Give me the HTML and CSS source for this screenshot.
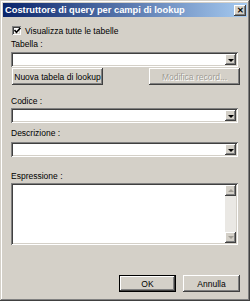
FILE: index.html
```html
<!DOCTYPE html>
<html lang="it">
<head>
    <meta charset="UTF-8">
    <title>Costruttore di query per campi di lookup</title>
    <link rel="stylesheet" href="styles.css">
</head>
<body>
    <div class="window">
        <!-- Barra del titolo -->
        <div class="titlebar">
            <span class="title">Costruttore di query per campi di lookup</span>
            <span class="close">&#x2715;</span>
        </div>

        <div class="content">
            <div class="check-row">
                <span class="checkbox">
                    <svg width="7" height="7" viewBox="0 0 7 7"><path d="M0.5 3 L2.5 5.2 L6.5 0.8" fill="none" stroke="#000" stroke-width="1.6"/></svg>
                </span>
                <span>Visualizza tutte le tabelle</span>
            </div>

            <div class="label lbl-tabella">Tabella :</div>
            <div class="combo c-tabella">
                <div class="combo-field"></div>
                <div class="combo-btn"><span class="arrow"></span></div>
            </div>

            <div class="btn-row">
                <button class="btn btn-nuova">Nuova tabela di lookup</button>
                <button class="btn btn-modifica" disabled>Modifica record...</button>
            </div>

            <div class="label lbl-codice">Codice :</div>
            <div class="combo c-codice">
                <div class="combo-field"></div>
                <div class="combo-btn"><span class="arrow"></span></div>
            </div>

            <div class="label lbl-descr">Descrizione :</div>
            <div class="combo c-descr">
                <div class="combo-field"></div>
                <div class="combo-btn"><span class="arrow"></span></div>
            </div>

            <div class="label lbl-espr">Espressione :</div>
            <div class="memo">
                <div class="memo-text"></div>
                <div class="scrollbar">
                    <div class="sb-btn"><span class="sb-arrow up"></span></div>
                    <div class="sb-track"></div>
                    <div class="sb-btn"><span class="sb-arrow down"></span></div>
                </div>
            </div>

            <div class="footer">
                <button class="btn btn-ok">OK</button>
                <button class="btn btn-annulla">Annulla</button>
            </div>
        </div>
    </div>
</body>
</html>
```

FILE: styles.css
```css
/* Finestra stile Windows classico */
body {
    margin: 0;
    padding: 0;
    background: #d4d0c8;
    font-family: 'Liberation Sans', Arial, sans-serif;
    font-size: 8.5px;
    color: #000;
}

.window {
    width: 250px;
    height: 301px;
    box-sizing: border-box;
    padding: 3px;
    background: #d4d0c8;
    box-shadow: inset -1px -1px #404040, inset 1px 1px #d4d0c8,
                inset -2px -2px #808080, inset 2px 2px #fff;
    display: flex;
    flex-direction: column;
}

/* Barra del titolo */
.titlebar {
    height: 14px;
    background: linear-gradient(90deg, #0a246a, #a6caf0);
    display: flex;
    align-items: center;
    justify-content: space-between;
    padding: 0 1px 0 2px;
}

.title {
    color: #fff;
    font-weight: bold;
    font-size: 9.3px;
}

.close {
    width: 12px;
    height: 11px;
    box-sizing: border-box;
    background: #d4d0c8;
    box-shadow: inset -1px -1px #404040, inset 1px 1px #fff, inset -2px -2px #808080;
    font-size: 8px;
    font-weight: bold;
    line-height: 11px;
    text-align: center;
    color: #000;
}

/* Contenuto */
.content {
    flex: 1;
    display: flex;
    flex-direction: column;
    padding: 0 8px 0 8px;
}

.check-row {
    margin-top: 9px;
    height: 9px;
    display: flex;
    align-items: center;
    gap: 4px;
    padding-left: 1px;
}

.checkbox {
    width: 9px;
    height: 9px;
    box-sizing: border-box;
    background: #fff;
    box-shadow: inset 1px 1px #808080, inset -1px -1px #fff,
                inset 2px 2px #404040, inset -2px -2px #d4d0c8;
    display: flex;
    align-items: center;
    justify-content: center;
}

.checkbox svg {
    margin-left: 1px;
}

.label {
    height: 10px;
    line-height: 10px;
}

.lbl-tabella { margin-top: 4px; }
.lbl-codice { margin-top: 11px; }
.lbl-descr { margin-top: 5px; }
.lbl-espr { margin-top: 14px; }

/* Combo box */
.combo {
    height: 15px;
    width: 227px;
    box-sizing: border-box;
    padding: 2px;
    background: #fff;
    box-shadow: inset 1px 1px #808080, inset -1px -1px #fff,
                inset 2px 2px #404040, inset -2px -2px #d4d0c8;
    display: flex;
}

.c-tabella { margin-top: 3px; }
.c-codice { margin-top: 2px; }
.c-descr { margin-top: 4px; }

.combo-field {
    flex: 1;
}

.combo-btn {
    width: 11px;
    background: #d4d0c8;
    box-shadow: inset -1px -1px #404040, inset 1px 1px #fff, inset -2px -2px #808080;
    display: flex;
    align-items: center;
    justify-content: center;
}

.arrow {
    width: 0;
    height: 0;
    border-left: 3px solid transparent;
    border-right: 3px solid transparent;
    border-top: 3px solid #000;
    margin-top: 1px;
}

/* Pulsanti */
.btn {
    font-family: inherit;
    font-size: 8.5px;
    height: 17px;
    padding: 0;
    border: none;
    background: #d4d0c8;
    color: #000;
    box-shadow: inset -1px -1px #404040, inset 1px 1px #fff, inset -2px -2px #808080;
}

.btn-row {
    margin-top: 1px;
    display: flex;
    justify-content: space-between;
    width: 229px;
}

.btn-nuova {
    width: 91px;
    margin-left: 1px;
}

.btn-modifica {
    width: 91px;
    color: #a09c94;
    text-shadow: 1px 1px #fff;
}

/* Area espressione */
.memo {
    margin-top: 2px;
    height: 62px;
    width: 227px;
    box-sizing: border-box;
    padding: 2px;
    background: #fff;
    box-shadow: inset 1px 1px #808080, inset -1px -1px #fff,
                inset 2px 2px #404040, inset -2px -2px #d4d0c8;
    display: flex;
}

.memo-text {
    flex: 1;
}

.scrollbar {
    width: 11px;
    display: flex;
    flex-direction: column;
}

.sb-btn {
    height: 11px;
    background: #d4d0c8;
    box-shadow: inset -1px -1px #404040, inset 1px 1px #fff, inset -2px -2px #808080;
    display: flex;
    align-items: center;
    justify-content: center;
}

.sb-track {
    flex: 1;
    background: #eae8e4;
}

.sb-arrow {
    width: 0;
    height: 0;
    border-left: 3px solid transparent;
    border-right: 3px solid transparent;
}

.sb-arrow.up { border-bottom: 3px solid #a09c94; }
.sb-arrow.down { border-top: 3px solid #a09c94; }

/* Pulsanti in basso */
.footer {
    margin-top: 30px;
    display: flex;
    justify-content: flex-end;
    gap: 7px;
    width: 229px;
}

.btn-ok,
.btn-annulla {
    width: 57px;
}

.btn-ok {
    box-shadow: inset 0 0 0 1px #000, inset -2px -2px #404040,
                inset 2px 2px #fff, inset -3px -3px #808080;
}
```
